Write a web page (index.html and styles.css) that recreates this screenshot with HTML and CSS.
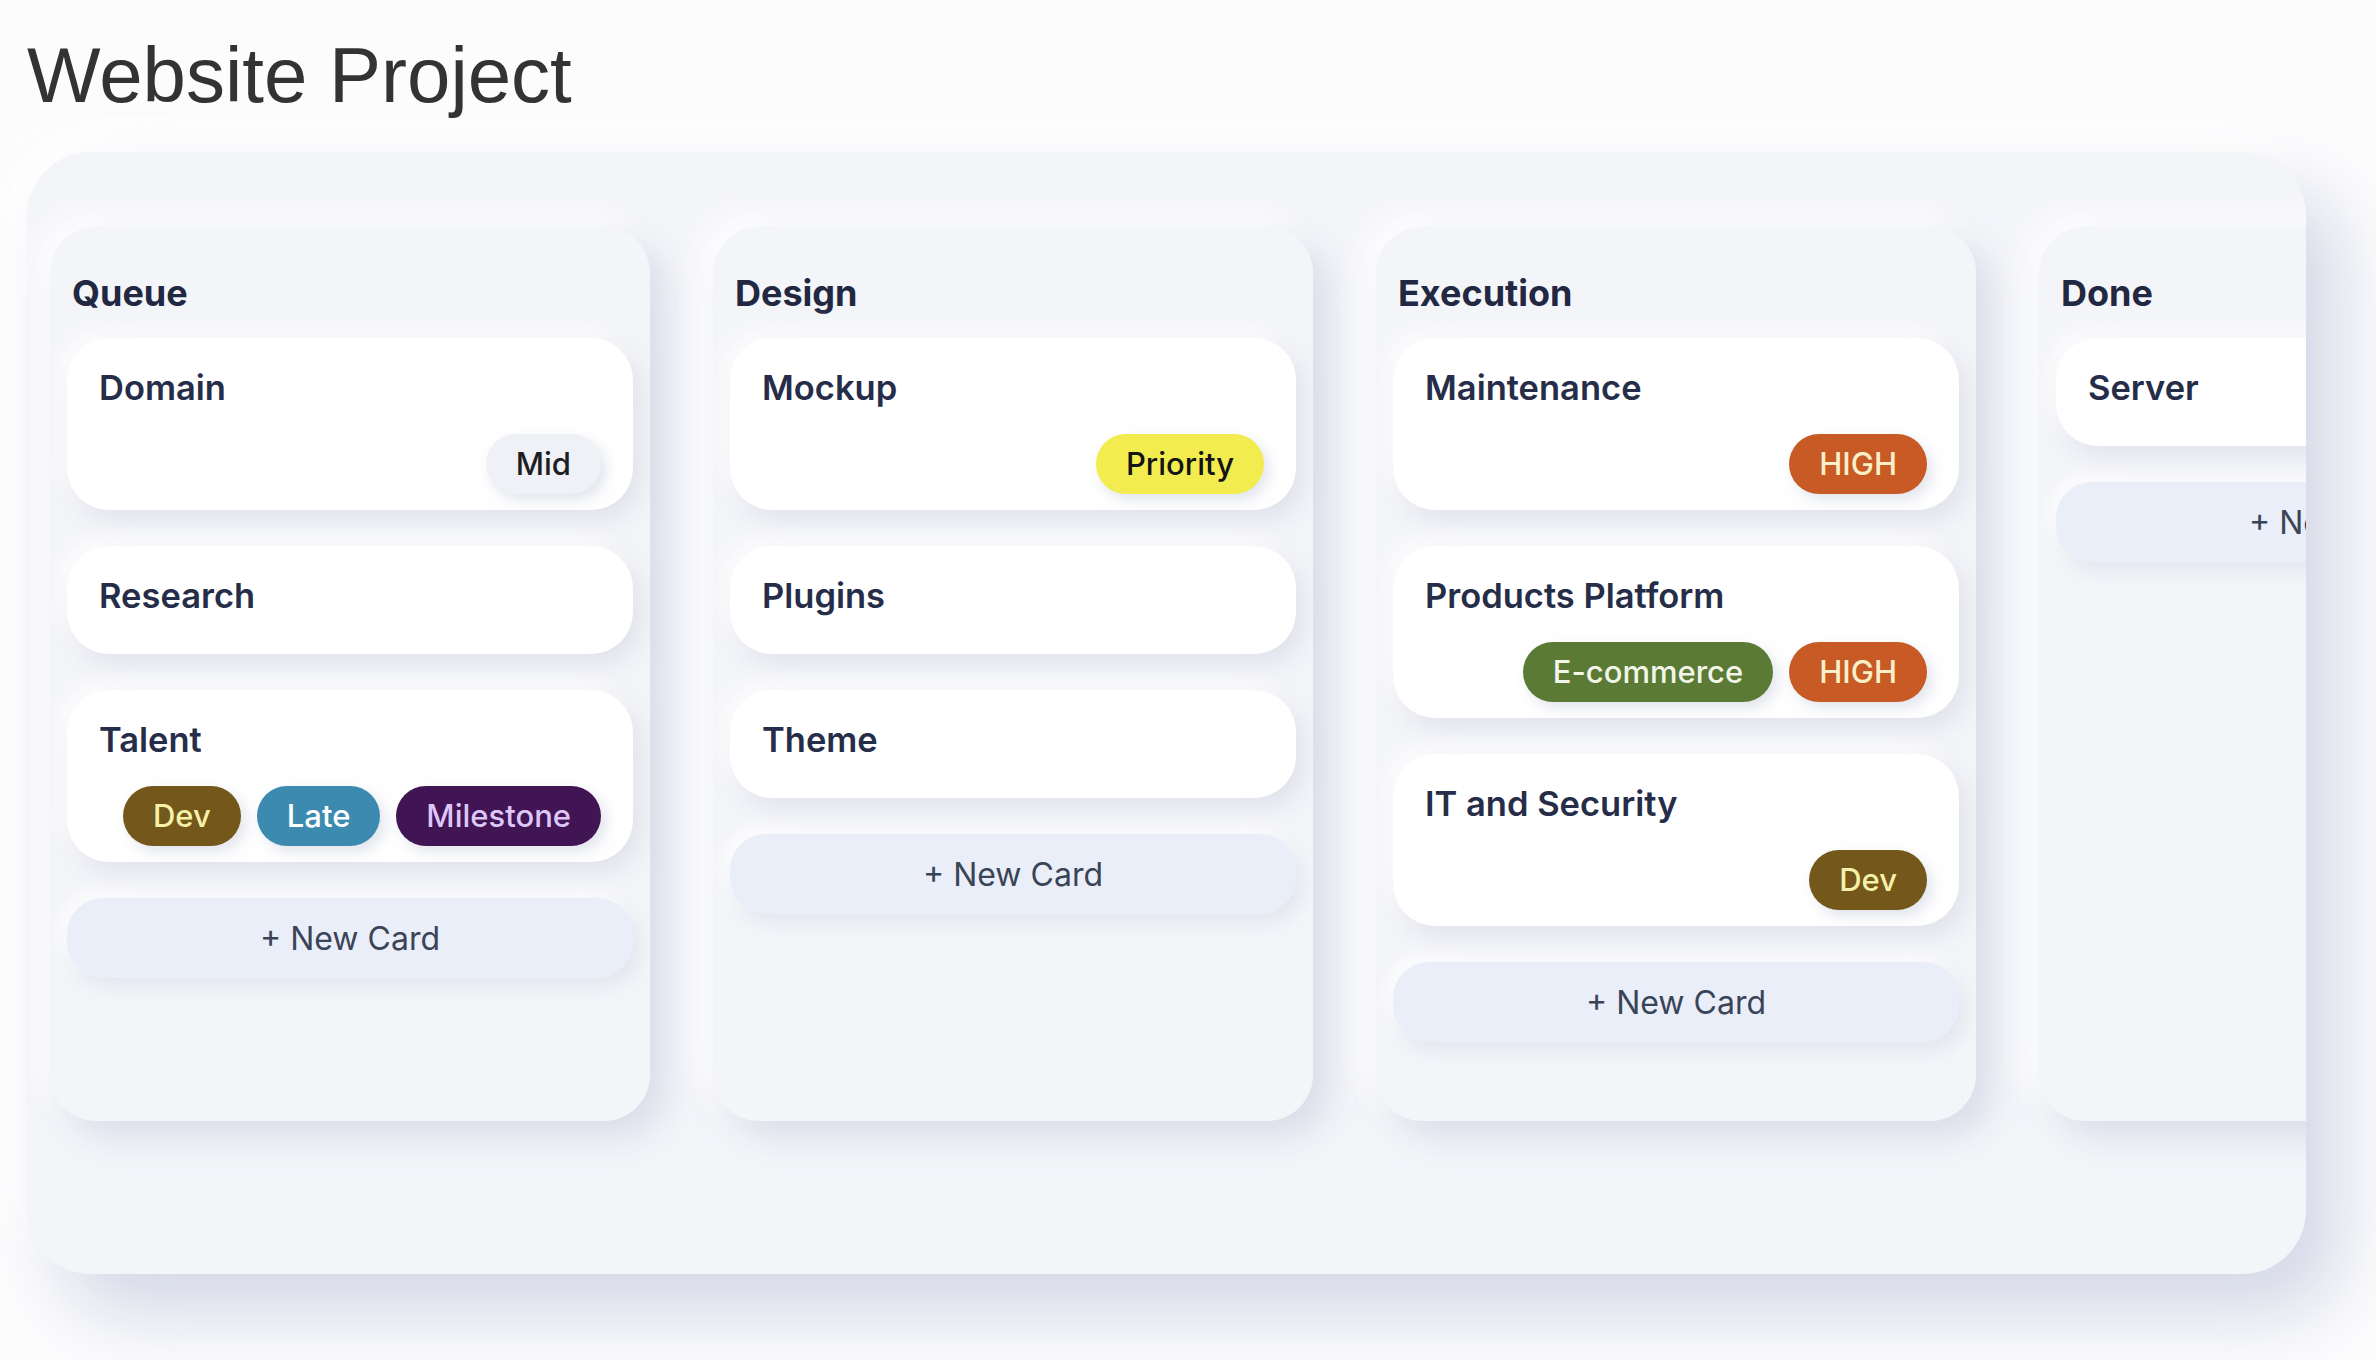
FILE: index.html
```html
<!DOCTYPE html>
<html lang="en">
<head>
<meta charset="utf-8">
<title>Website Project</title>
<link rel="stylesheet" href="styles.css">
</head>
<body>
<div class="page">
  <h1 class="page-title">Website Project</h1>
  <div class="board">
    <div class="columns">
      <section class="column">
        <h2 class="column-title">Queue</h2>
        <div class="card">
          <h3 class="card-title">Domain</h3>
          <div class="tags"><span class="tag tag-mid">Mid</span></div>
        </div>
        <div class="card">
          <h3 class="card-title">Research</h3>
        </div>
        <div class="card">
          <h3 class="card-title">Talent</h3>
          <div class="tags">
            <span class="tag tag-dev">Dev</span>
            <span class="tag tag-late">Late</span>
            <span class="tag tag-milestone">Milestone</span>
          </div>
        </div>
        <button class="new-card">+ New Card</button>
      </section>
      <section class="column">
        <h2 class="column-title">Design</h2>
        <div class="card">
          <h3 class="card-title">Mockup</h3>
          <div class="tags"><span class="tag tag-priority">Priority</span></div>
        </div>
        <div class="card">
          <h3 class="card-title">Plugins</h3>
        </div>
        <div class="card">
          <h3 class="card-title">Theme</h3>
        </div>
        <button class="new-card">+ New Card</button>
      </section>
      <section class="column">
        <h2 class="column-title">Execution</h2>
        <div class="card">
          <h3 class="card-title">Maintenance</h3>
          <div class="tags"><span class="tag tag-high">HIGH</span></div>
        </div>
        <div class="card">
          <h3 class="card-title">Products Platform</h3>
          <div class="tags">
            <span class="tag tag-ecom">E-commerce</span>
            <span class="tag tag-high">HIGH</span>
          </div>
        </div>
        <div class="card">
          <h3 class="card-title">IT and Security</h3>
          <div class="tags"><span class="tag tag-dev">Dev</span></div>
        </div>
        <button class="new-card">+ New Card</button>
      </section>
      <section class="column">
        <h2 class="column-title">Done</h2>
        <div class="card">
          <h3 class="card-title">Server</h3>
        </div>
        <button class="new-card">+ New Card</button>
      </section>
    </div>
  </div>
</div>
</body>
</html>
```
FILE: styles.css
```css
* { box-sizing: border-box; }

html {
  height: 100%;
  background: #fcfcfd;
}

body {
  margin: 0;
  padding: 0;
  min-height: 100%;
  background: #fcfcfd;
  font-family: Inter, "Noto Sans", sans-serif;
}

.page {
  padding: 30px 70px 0 27px;
}

.page-title {
  margin: 0 0 32px 0;
  font-family: "Liberation Sans", Arial, sans-serif;
  font-weight: 400;
  font-size: 78px;
  line-height: 90px;
  color: #333333;
}

.board {
  background: #f4f5f9;
  border-radius: 64px;
  padding: 75px 0 153px 23px;
  overflow: hidden;
  box-shadow: 34px 40px 70px rgba(186, 193, 216, 0.6),
              -20px -20px 50px rgba(255, 255, 255, 0.95);
}

.columns {
  display: flex;
  align-items: stretch;
  gap: 63px;
}

.column {
  flex: 0 0 600px;
  width: 600px;
  background: #f4f5f9;
  border-radius: 46px;
  padding: 44px 17px 79px;
  display: flex;
  flex-direction: column;
  gap: 36px;
  box-shadow: 16px 16px 32px rgba(200, 206, 222, 0.6),
              -14px -14px 30px rgba(255, 255, 255, 0.85);
}

.column-title {
  margin: 0 5px -13px;
  font-size: 36px;
  line-height: 44px;
  font-weight: 650;
  color: #222842;
}

.card {
  background: #ffffff;
  border-radius: 42px;
  padding: 29px 32px 16px;
  box-shadow: 8px 10px 22px rgba(205, 210, 224, 0.5),
              -8px -8px 20px rgba(255, 255, 255, 0.9);
}

.card-title {
  margin: 0 0 22px 0;
  font-size: 34.5px;
  line-height: 41px;
  font-weight: 620;
  color: #262d48;
}

.tags {
  display: flex;
  justify-content: flex-end;
  flex-wrap: wrap;
  gap: 16px;
  padding-top: 4px;
}

.tag {
  display: inline-block;
  height: 60px;
  line-height: 60px;
  padding: 0 30px;
  border-radius: 30px;
  font-size: 31px;
  font-weight: 500;
  box-shadow: 5px 6px 14px rgba(170, 178, 200, 0.35);
}

.tag-mid { background: #f0f1f6; color: #1e1e22; }
.tag-priority { background: #f2ec4f; color: #141414; }
.tag-high { background: #c85a25; color: #fbefc9; }
.tag-ecom { background: #5b7a35; color: #f2f6e8; }
.tag-dev { background: #74571b; color: #f6f1a8; }
.tag-late { background: #3d8ab1; color: #ffffff; }
.tag-milestone { background: #411453; color: #dcc7f8; }

.new-card {
  display: block;
  width: 100%;
  height: 80px;
  border: none;
  border-radius: 36px;
  background: #eaeef8;
  color: #3a4457;
  font-family: Inter, "Noto Sans", sans-serif;
  font-size: 32px;
  font-weight: 400;
  text-align: center;
  box-shadow: 6px 8px 18px rgba(205, 210, 224, 0.45),
              -6px -6px 16px rgba(255, 255, 255, 0.9);
}
```
